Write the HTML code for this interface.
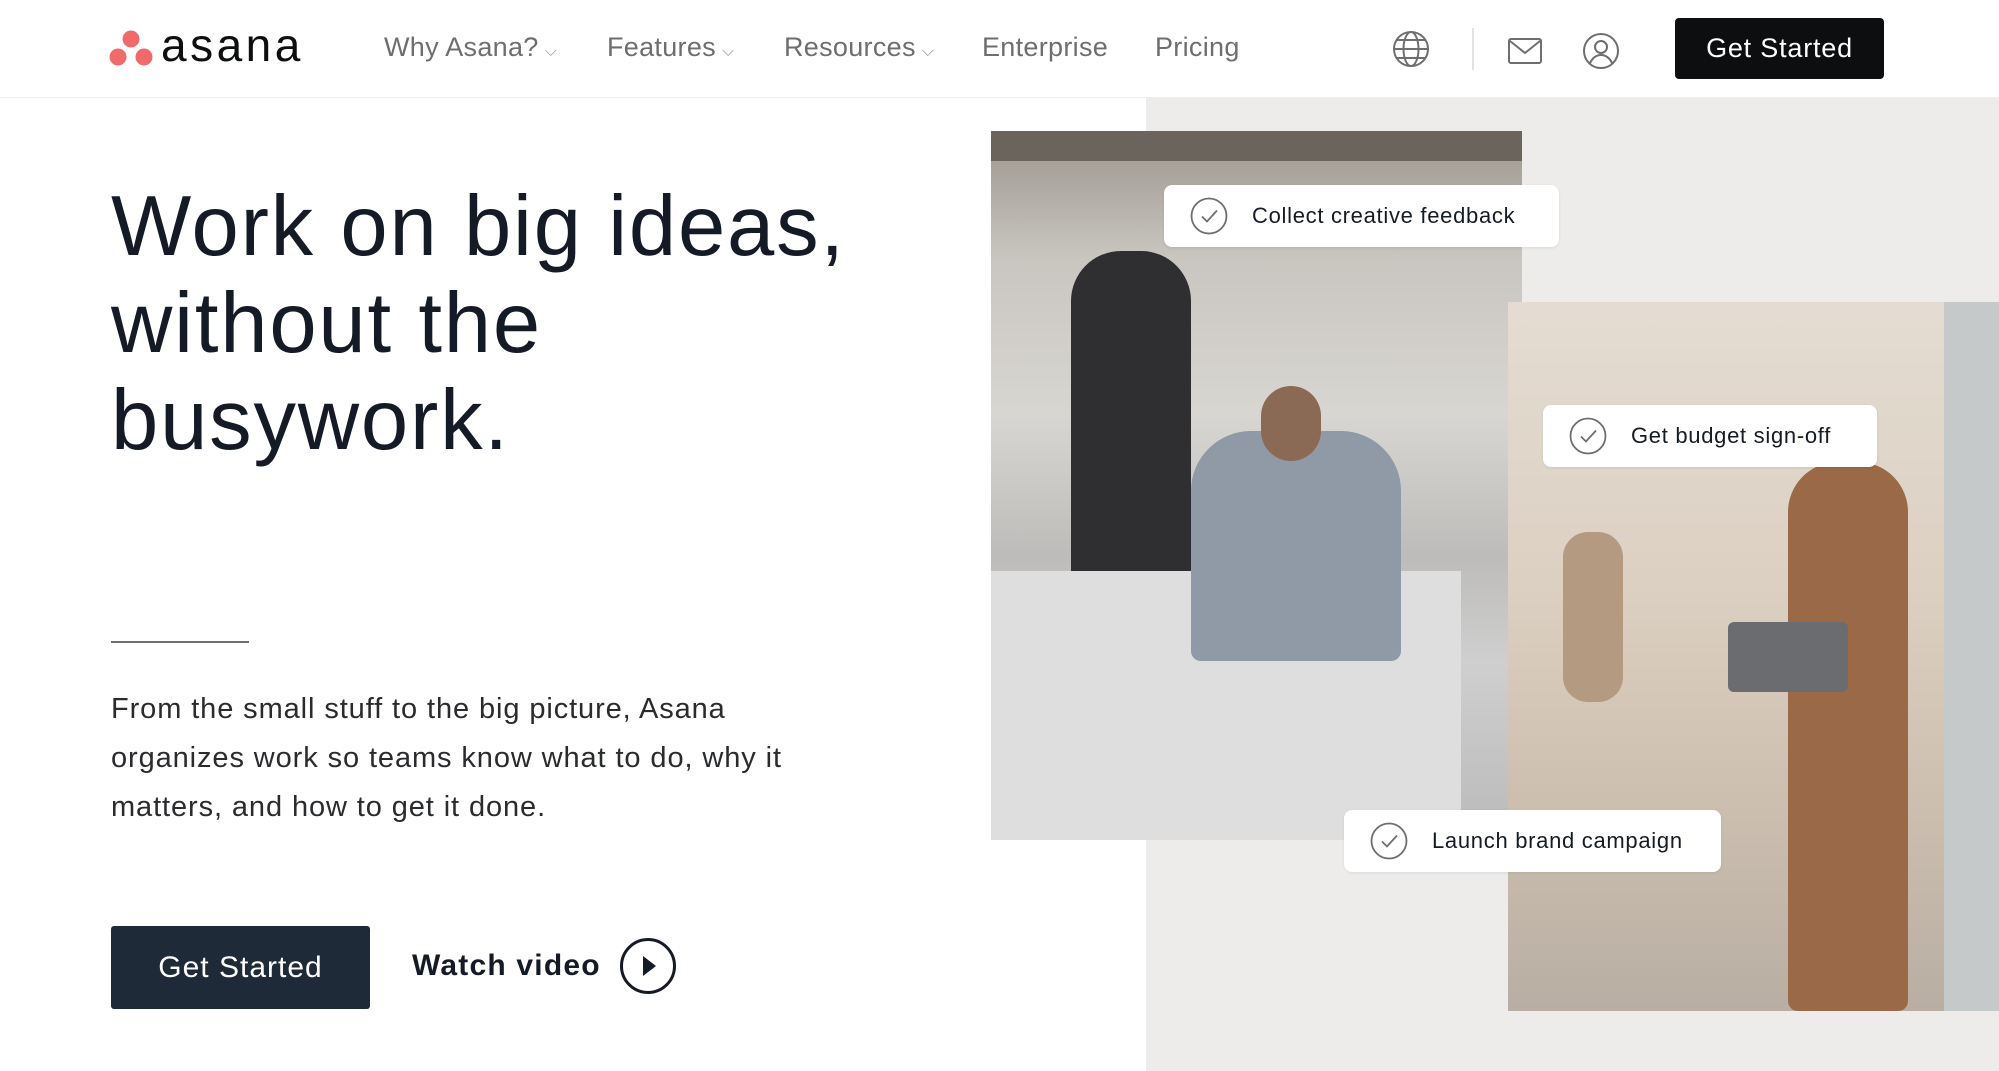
<!DOCTYPE html>
<html><head><meta charset="utf-8"><style>
*{margin:0;padding:0;box-sizing:border-box}
body{width:1999px;height:1071px;overflow:hidden;background:#fff;font-family:"Liberation Sans",sans-serif;position:relative;color:#151b26}
.nav{position:absolute;left:0;top:0;width:1999px;height:98px;background:#fff;border-bottom:1px solid #eee;z-index:5}
.ni{position:absolute;top:32px;font-size:27px;color:#6f6e6f;letter-spacing:.3px}
.ni small{font-size:16px;color:#999;margin-left:6px}
.gray{position:absolute;left:1146px;top:98px;right:0;bottom:0;background:#edeceb}
h1{position:absolute;left:111px;top:178px;font-weight:400;font-size:85px;line-height:97px;letter-spacing:1.8px;color:#151b26}
.rule{position:absolute;left:111px;top:641px;width:138px;height:2px;background:#6d6e6f}
p.d{position:absolute;left:111px;top:685px;font-size:29px;line-height:49px;color:#2a2b2d;width:710px;letter-spacing:.9px}
.btn{position:absolute;left:111px;top:926px;width:259px;height:83px;background:#1e2a37;color:#fff;font-size:30px;border-radius:3px;text-align:center;line-height:83px;letter-spacing:1px}
.wv{position:absolute;left:412px;top:949px;font-size:30px;font-weight:700;letter-spacing:1.2px}
.ph1{position:absolute;left:991px;top:131px;width:531px;height:709px;background:linear-gradient(180deg,#9a958c 0%,#c9c6c0 18%,#d8d6d2 40%,#bdbcba 60%,#cfcfcf 75%,#bababa 100%)}
.ph2{position:absolute;left:1508px;top:302px;width:491px;height:709px;background:linear-gradient(180deg,#e4dcd2 0%,#dcd0c2 40%,#cdbfb0 70%,#b8aea3 100%)}
.card{position:absolute;background:#fff;border-radius:8px;height:62px;font-size:22px;color:#151b26;display:flex;align-items:center;padding-left:26px;box-shadow:0 1px 3px rgba(0,0,0,.08);letter-spacing:.7px}
.card svg{margin-right:24px}
</style></head><body>
<div class="nav">
 <svg style="position:absolute;left:109px;top:30px" width="44" height="38" viewBox="0 0 44 38"><circle cx="22" cy="9" r="8.5" fill="#f06a6a"/><circle cx="9" cy="27" r="8.5" fill="#f06a6a"/><circle cx="35" cy="27" r="8.5" fill="#f06a6a"/></svg>
 <div style="position:absolute;left:161px;top:18px;font-size:46px;color:#0d0e10;letter-spacing:3.5px">asana</div>
 <div class="ni" style="left:384px">Why Asana?<small>⌵</small></div>
 <div class="ni" style="left:607px">Features<small>⌵</small></div>
 <div class="ni" style="left:784px">Resources<small>⌵</small></div>
 <div class="ni" style="left:982px">Enterprise</div>
 <div class="ni" style="left:1155px">Pricing</div>
 <svg style="position:absolute;left:1392px;top:30px" width="38" height="38" viewBox="0 0 38 38" fill="none" stroke="#6f6e6f" stroke-width="2"><circle cx="19" cy="19" r="17"/><ellipse cx="19" cy="19" rx="7.5" ry="17"/><path d="M2 19h34M5 10h28M5 28h28"/></svg>
 <div style="position:absolute;left:1472px;top:28px;width:2px;height:42px;background:#e3e3e3"></div>
 <svg style="position:absolute;left:1508px;top:38px" width="34" height="26" viewBox="0 0 34 26" fill="none" stroke="#6f6e6f" stroke-width="2"><rect x="1" y="1" width="32" height="24" rx="2"/><path d="M2 3l15 12 15-12"/></svg>
 <svg style="position:absolute;left:1582px;top:32px" width="38" height="38" viewBox="0 0 38 38" fill="none" stroke="#6f6e6f" stroke-width="2"><circle cx="19" cy="19" r="17"/><circle cx="19" cy="15" r="6"/><path d="M8 31c3-6 7-8 11-8s8 2 11 8"/></svg>
 <div style="position:absolute;left:1675px;top:18px;width:209px;height:61px;background:#0d0e10;color:#fff;border-radius:4px;font-size:27px;text-align:center;line-height:61px;letter-spacing:.8px">Get Started</div>
</div>
<div class="gray"></div>
<h1>Work on big ideas,<br>without the<br>busywork.</h1>
<div class="rule"></div>
<p class="d">From the small stuff to the big picture, Asana organizes work so teams know what to do, why it matters, and how to get it done.</p>
<div class="btn">Get Started</div>
<div class="wv">Watch video</div>
<svg style="position:absolute;left:619px;top:937px" width="58" height="58" viewBox="0 0 58 58"><circle cx="29" cy="29" r="26.5" fill="none" stroke="#151b26" stroke-width="3"/><path d="M24 19l13 10-13 10z" fill="#151b26"/></svg>
<div class="ph1">
 <div style="position:absolute;left:0;top:0;width:531px;height:30px;background:#6b645c"></div>
 <div style="position:absolute;left:80px;top:120px;width:120px;height:330px;background:#2f2f31;border-radius:50px 50px 10px 10px"></div>
 <div style="position:absolute;left:0;top:440px;width:470px;height:269px;background:#dedede"></div>
 <div style="position:absolute;left:200px;top:300px;width:210px;height:230px;background:#8f9aa6;border-radius:60px 60px 10px 10px"></div>
 <div style="position:absolute;left:270px;top:255px;width:60px;height:75px;background:#8a6a55;border-radius:30px"></div>
</div>
<div class="ph2">
 <div style="position:absolute;right:0;top:0;width:55px;height:709px;background:#c6c9c9"></div>
 <div style="position:absolute;left:280px;top:160px;width:120px;height:549px;background:#9a6a48;border-radius:50px 50px 10px 10px"></div>
 <div style="position:absolute;left:220px;top:320px;width:120px;height:70px;background:#6a6c70;border-radius:6px"></div>
 <div style="position:absolute;left:55px;top:230px;width:60px;height:170px;background:#b39a80;border-radius:25px"></div>
</div>
<div class="card" style="left:1164px;top:185px;width:395px"><svg width="38" height="38" viewBox="0 0 38 38" fill="none" stroke="#6f6e6f" stroke-width="1.8"><circle cx="19" cy="19" r="17.5"/><path d="M12 19.5l5 5 10-11"/></svg>Collect creative feedback</div>
<div class="card" style="left:1543px;top:405px;width:334px"><svg width="38" height="38" viewBox="0 0 38 38" fill="none" stroke="#6f6e6f" stroke-width="1.8"><circle cx="19" cy="19" r="17.5"/><path d="M12 19.5l5 5 10-11"/></svg>Get budget sign-off</div>
<div class="card" style="left:1344px;top:810px;width:377px"><svg width="38" height="38" viewBox="0 0 38 38" fill="none" stroke="#6f6e6f" stroke-width="1.8"><circle cx="19" cy="19" r="17.5"/><path d="M12 19.5l5 5 10-11"/></svg>Launch brand campaign</div>
</body></html>
